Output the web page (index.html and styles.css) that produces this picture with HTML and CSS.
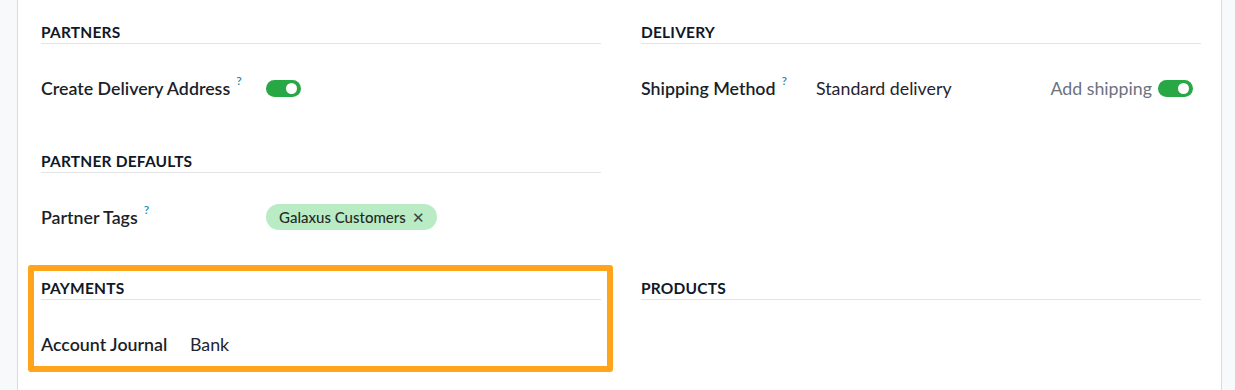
FILE: index.html
```html
<!DOCTYPE html>
<html lang="en">
<head>
<meta charset="utf-8">
<title>Settings</title>
<link rel="stylesheet" href="styles.css">
</head>
<body>
<div class="page">
  <div class="sheet">
    <section class="group">
      <h3 class="group-title">Partners</h3>
      <div class="field w225">
        <label class="label">Create Delivery Address<sup>?</sup></label>
        <div class="value"><span class="toggle"></span></div>
      </div>
    </section>
    <section class="group">
      <h3 class="group-title">Delivery</h3>
      <div class="field w175">
        <label class="label">Shipping Method<sup>?</sup></label>
        <div class="value split">
          <span>Standard delivery</span>
          <span class="addon">Add shipping <span class="toggle"></span></span>
        </div>
      </div>
    </section>
    <section class="group tight">
      <h3 class="group-title">Partner Defaults</h3>
      <div class="field w225">
        <label class="label">Partner Tags<sup>?</sup></label>
        <div class="value"><span class="tag">Galaxus Customers <span class="tag-x">✕</span></span></div>
      </div>
    </section>
    <section class="group tight empty"></section>
    <section class="group highlighted">
      <h3 class="group-title">Payments</h3>
      <div class="field w149">
        <label class="label">Account Journal</label>
        <div class="value">Bank</div>
      </div>
    </section>
    <section class="group">
      <h3 class="group-title">Products</h3>
    </section>
  </div>
</div>
</body>
</html>
```

FILE: styles.css
```css
* { box-sizing: border-box; }
html, body { margin: 0; padding: 0; }
body {
  background: #f8f9fa;
  font-family: "Lato", "Liberation Sans", sans-serif;
  color: #1f2430;
  height: 390px;
  overflow: hidden;
}
.page { display: flex; height: 390px; }
.sheet {
  margin-left: 17px;
  width: 1205px;
  background: #fff;
  border-left: 1px solid #d8dbdf;
  border-right: 1px solid #d8dbdf;
  padding: 22px 0 0 23px;
  display: grid;
  grid-template-columns: 560px 560px;
  column-gap: 40px;
  align-content: start;
}
.group { position: relative; margin-bottom: 50px; }
.group.tight { margin-bottom: 48px; }
.group-title {
  margin: 0;
  font-size: 15.5px;
  font-weight: 700;
  line-height: 20px;
  text-transform: uppercase;
  letter-spacing: 0.2px;
  padding-bottom: 1px;
  border-bottom: 1px solid #e2e4e7;
  color: #111827;
}
.field {
  display: flex;
  align-items: center;
  margin-top: 31px;
  min-height: 26px;
  font-size: 17.8px;
}
.label {
  flex: none;
  font-weight: 600;
  color: #1b1f2a;
  white-space: nowrap;
}
.w225 .label { width: 225px; }
.w175 .label { width: 175px; }
.w149 .label { width: 149px; }
.label sup {
  font-size: 12px;
  color: #1a8ab5;
  font-weight: 600;
  margin-left: 6px;
  vertical-align: 10px;
  line-height: 0;
}
.value { flex: 1; display: flex; align-items: center; color: #1f2430; }
.split { justify-content: space-between; padding-right: 8px; }
.addon { display: flex; align-items: center; gap: 6px; color: #6b7380; }
.toggle {
  display: inline-block;
  position: relative;
  width: 35px;
  height: 17px;
  border-radius: 9px;
  background: #28a745;
}
.toggle::after {
  content: "";
  position: absolute;
  right: 4px;
  top: 3px;
  width: 11px;
  height: 11px;
  border-radius: 50%;
  background: #fff;
}
.tag {
  display: inline-flex;
  align-items: center;
  height: 26px;
  padding: 0 12px 0 13px;
  border-radius: 13px;
  background: #b9ebc4;
  color: #1f2a26;
  font-size: 15px;
  font-weight: 500;
  gap: 6px;
}
.tag-x { font-size: 15px; color: #3b4440; font-weight: 400; }
.highlighted::after {
  content: "";
  position: absolute;
  top: -13px;
  left: -13px;
  right: -12px;
  bottom: -15px;
  border: 6px solid #ffa41b;
  border-radius: 3px;
  pointer-events: none;
}
```
